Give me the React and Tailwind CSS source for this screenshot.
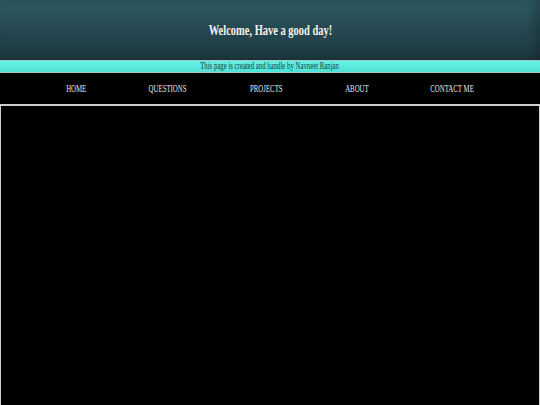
import React from "react";

const links = [
   { label: "HOME", w: "w-[20px]" },
   { label: "QUESTIONS", w: "w-[38px]" },
   { label: "PROJECTS", w: "w-[32px]" },
   { label: "ABOUT", w: "w-[23px]" },
   { label: "CONTACT ME", w: "w-[43px]" },
];

const App = () => {
   return (
      <div className="w-[540px] h-[405px] overflow-hidden bg-black font-['Liberation_Serif',serif]">
         {/* header */}
         <header className="h-[60px] flex items-center justify-center bg-gradient-to-b from-[#2e5a63] to-[#1d373e] shadow-[inset_-6px_0_10px_rgba(0,0,0,0.2)]">
            <h1 className="text-[15.5px] font-bold text-[#f2f2f2] whitespace-nowrap scale-x-[0.675]">
               Welcome, Have a good day!
            </h1>
         </header>

         <div className="h-[13px] flex items-center justify-center bg-gradient-to-b from-[#66f2e4] to-[#4fe2d6] border-t border-b border-[#9fc9c6]">
            <p className="text-[10.5px] leading-none text-[#173f44] whitespace-nowrap scale-x-[0.645]">
               This page is created and handle by Navneet Ranjan
            </p>
         </div>

         {/* nav */}
         <nav className="h-[31px] flex items-center justify-center gap-[63px] bg-black">
            {links.map((link) => (
               <a
                  key={link.label}
                  className={`${link.w} flex justify-center text-[11px] text-[#e6e6e6] whitespace-nowrap`}
               >
                  <span className="scale-x-[0.62]">{link.label}</span>
               </a>
            ))}
         </nav>

         <main className="h-[320px] bg-black border border-t-2 border-[#d0d0d0]"></main>
      </div>
   );
};

export default App;
